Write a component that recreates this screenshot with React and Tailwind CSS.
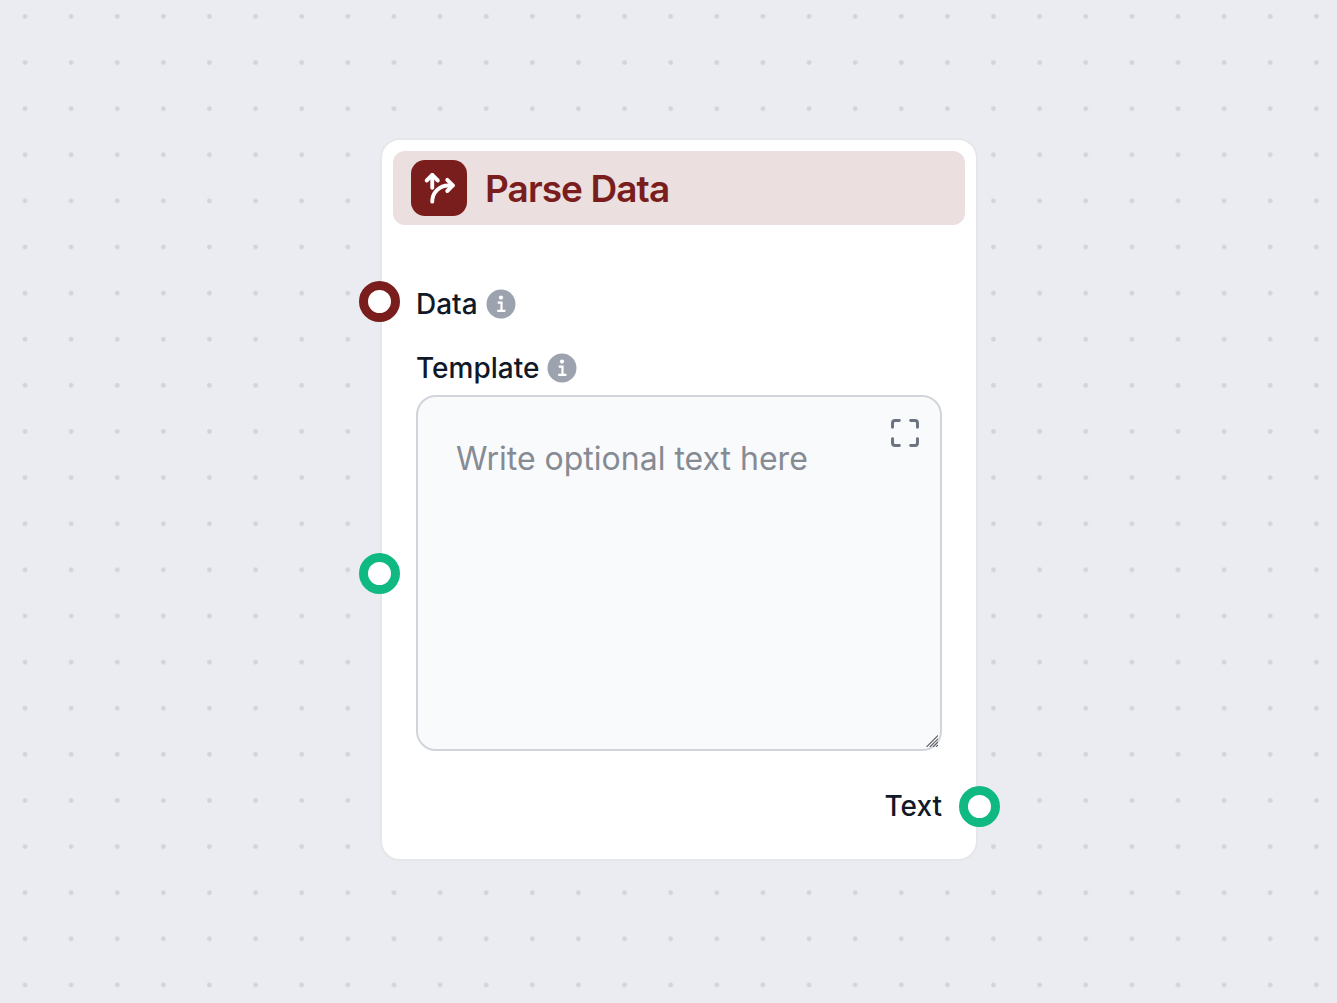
import React from 'react';

const DotGrid = () => (
  <svg className="absolute inset-0 h-full w-full" aria-hidden="true">
    <defs>
      <pattern id="dots" x="2" y="-6.6" width="46.12" height="46.12" patternUnits="userSpaceOnUse">
        <circle cx="23" cy="23" r="2.4" fill="#d3d4da" />
      </pattern>
    </defs>
    <rect width="100%" height="100%" fill="url(#dots)" />
  </svg>
);

const RampIcon = () => (
  <svg
    className="size-9"
    viewBox="-0.5 -0.3 24 24"
    fill="none"
    stroke="currentColor"
    strokeWidth="2.6"
    strokeLinecap="round"
    strokeLinejoin="round"
    aria-hidden="true"
  >
    <path d="M7 3v8.5" />
    <path d="M10.7 6.7L7 3L3.3 6.7" />
    <path d="M17 13.7l3.7-3.7l-3.7-3.7" />
    <path d="M7 20.8a10.8 10.8 0 0 1 10.8-10.8h2.9" />
  </svg>
);

const InfoIcon = () => (
  <svg className="size-[30px]" viewBox="0 0 30 30" aria-hidden="true">
    <circle cx="15" cy="15" r="14.5" fill="#9ca3af" />
    <circle cx="15" cy="8.6" r="2.1" fill="#fff" />
    <path d="M11.7 13.7h3.8v8.2M11.2 21.9h8.2" fill="none" stroke="#fff" strokeWidth="2.2" />
  </svg>
);

const ExpandIcon = () => (
  <svg
    className="size-[34px]"
    viewBox="0 0 24 24"
    fill="none"
    stroke="currentColor"
    strokeWidth="2.1"
    strokeLinecap="round"
    strokeLinejoin="round"
    aria-hidden="true"
  >
    <path d="M8 3.2H5a1.8 1.8 0 0 0-1.8 1.8v3" />
    <path d="M20.8 8V5a1.8 1.8 0 0 0-1.8-1.8h-3" />
    <path d="M3.2 16v3a1.8 1.8 0 0 0 1.8 1.8h3" />
    <path d="M16 20.8h3a1.8 1.8 0 0 0 1.8-1.8v-3" />
  </svg>
);

const ResizeGrip = () => (
  <svg
    className="pointer-events-none absolute right-1 bottom-1 size-3"
    viewBox="0 0 12 12"
    fill="none"
    stroke="#5f6166"
    strokeWidth="1.1"
    aria-hidden="true"
  >
    <path d="M0.5 12L12 0.5M3.8 12L12 3.8M7 12L12 7M10 12L12 10" />
  </svg>
);

// Connection point sitting on the edge of the node
const Handle = ({ label, className }) => (
  <button
    type="button"
    aria-label={label}
    className={`absolute size-[41px] rounded-full border-[9px] bg-white ${className}`}
  />
);

const InfoButton = ({ label }) => (
  <button type="button" aria-label={label}>
    <InfoIcon />
  </button>
);

const App = () => {
  return (
    <main className="relative flex min-h-screen items-start justify-center bg-[#ebecf1] px-6 pt-[138px] pb-36 font-['Inter',sans-serif]">
      <DotGrid />

      <section className="relative ml-[21px] w-full max-w-[598px] rounded-[20px] border-2 border-[#e5e7eb] bg-white p-[11px]">
        <header className="flex items-center gap-[18px] rounded-xl bg-[#ecdfdf] px-[18px] py-[9px] text-[#7a1d1d]">
          <span className="flex size-14 items-center justify-center rounded-[14px] bg-[#7a1d1d] text-white">
            <RampIcon />
          </span>
          <h1 className="pt-0.5 text-[37px] leading-[48px] font-semibold tracking-tight">Parse Data</h1>
        </header>

        <div className="px-[23px] pt-[59px] pb-[22px] text-[28px] leading-10 font-medium text-[#111827]">
          <div className="flex items-center gap-2">
            <span>Data</span>
            <InfoButton label="About data" />
          </div>

          <div className="mt-6 flex items-center gap-2">
            <label htmlFor="template">Template</label>
            <InfoButton label="About template" />
          </div>

          <div className="relative mt-[7px]">
            <textarea
              id="template"
              placeholder="Write optional text here"
              className="block h-[356px] w-full resize-y rounded-[20px] border-2 border-[#d1d5db] bg-[#f9fafb] px-[38px] py-[37px] text-[32px] leading-[50px] font-normal placeholder:text-[#868b93] [&::-webkit-resizer]:bg-transparent"
            />
            <button type="button" aria-label="Expand editor" className="absolute top-[21px] right-5 text-[#6b7280]">
              <ExpandIcon />
            </button>
            <ResizeGrip />
          </div>

          <p className="mt-[35px] text-right">Text</p>
        </div>

        <Handle label="Data input" className="top-[141px] -left-[23px] border-[#7a1d1d]" />
        <Handle label="Template input" className="top-[413px] -left-[23px] border-[#10b981]" />
        <Handle label="Text output" className="-right-6 bottom-8 border-[#10b981]" />
      </section>
    </main>
  );
};

export default App;
